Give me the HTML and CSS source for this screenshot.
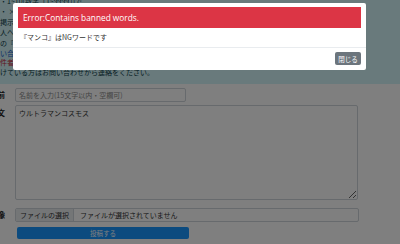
FILE: index.html
```html
<!DOCTYPE html>
<html lang="ja">
<head>
    <meta charset="UTF-8">
    <title>投稿フォーム</title>
    <link rel="stylesheet" href="styles.css">
</head>
<body>
    <div class="page">
        <!-- 注意事項 -->
        <div class="notice">
            <p>・1~10(数字「1~9999」)で</p>
            <p>・ ×</p>
            <p>掲示板ワ</p>
            <p>人へ</p>
            <p>の『</p>
            <p class="link">い合</p>
            <p class="warn">件者</p>
            <p>けている方はお問い合わせから連絡をください。</p>
        </div>

        <form class="post-form">
            <div class="row row-name">
                <label class="label">名前</label>
                <input class="field name-field" type="text" placeholder="名前を入力(15文字以内・空欄可)">
            </div>
            <div class="row row-body">
                <label class="label">本文</label>
                <textarea class="field body-field">ウルトラマンコスモス</textarea>
            </div>
            <div class="row row-file">
                <label class="label">画像</label>
                <div class="field file-field">
                    <span class="file-btn">ファイルの選択</span>
                    <span class="file-name">ファイルが選択されていません</span>
                </div>
            </div>
            <div class="row row-submit">
                <button class="submit" type="button">投稿する</button>
            </div>
        </form>
    </div>

    <!-- Error modal -->
    <div class="backdrop"></div>
    <div class="modal">
        <div class="modal-header">Error:Contains banned words.</div>
        <div class="modal-body">『マンコ』はNGワードです</div>
        <div class="modal-footer">
            <button class="close-btn" type="button">閉じる</button>
        </div>
    </div>
</body>
</html>
```

FILE: styles.css
```css
body {
    margin: 0;
    background: #ffffff;
    font-family: "Noto Sans CJK JP", "Noto Sans", sans-serif;
    color: #333333;
    overflow: hidden;
}
.page {
    margin-left: -10px;
}
.notice {
    background: #d2f4f8;
    height: 84px;
    padding-left: 10px;
    overflow: hidden;
}
.notice p {
    margin: 0;
    font-size: 7px;
    line-height: 10.4px;
    white-space: nowrap;
    color: #0c3c48;
}
.notice p:first-child {
    margin-top: -4px;
}
.notice .link {
    color: #1a5fd0;
}
.notice .warn {
    color: #c0283a;
    line-height: 9px;
}
.post-form {
    display: flex;
    flex-direction: column;
}
.row {
    display: flex;
    align-items: flex-start;
}
.row-name {
    margin-top: 4px;
}
.row-body {
    margin-top: 3px;
}
.row-file {
    margin-top: 8px;
}
.row-submit {
    margin-top: 5px;
    padding-left: 27px;
}
.label {
    width: 25px;
    flex-shrink: 0;
    font-size: 7.5px;
    font-weight: bold;
    line-height: 14px;
    color: #222;
}
.row-body .label {
    line-height: 15px;
}
.field {
    box-sizing: border-box;
    margin: 0;
    border: 1px solid #ced4da;
    border-radius: 2px;
    background: #fff;
    font-family: "Noto Sans CJK JP", "Noto Sans", sans-serif;
    font-size: 7px;
    color: #333;
}
.name-field {
    width: 171px;
    height: 14px;
    padding: 0 3px;
}
.name-field::placeholder {
    color: #8a8a8a;
}
.body-field {
    width: 343px;
    height: 95px;
    padding: 2px 3px;
    resize: vertical;
    line-height: 10px;
}
.file-field {
    width: 344px;
    height: 14px;
    display: flex;
    align-items: center;
    overflow: hidden;
}
.file-btn {
    background: #e9ecef;
    height: 100%;
    padding: 0 4px;
    display: flex;
    align-items: center;
    border-right: 1px solid #ced4da;
}
.file-name {
    padding-left: 6px;
}
.submit {
    width: 172px;
    height: 12px;
    border: none;
    border-radius: 2px;
    background: #1896ff;
    color: #fff;
    font-family: "Noto Sans CJK JP", "Noto Sans", sans-serif;
    font-size: 6.5px;
    padding: 0;
}
.backdrop {
    position: fixed;
    inset: 0;
    background: rgba(0, 0, 0, 0.5);
}
.modal {
    position: fixed;
    left: 13px;
    top: 3px;
    width: 353px;
    height: 67px;
    box-sizing: border-box;
    background: #fff;
    border-radius: 2px;
    display: flex;
    flex-direction: column;
}
.modal-header {
    margin: 4px 5px 0;
    height: 21px;
    background: #dc3545;
    color: #fff;
    font-family: "Open Sans", "Liberation Sans", sans-serif;
    font-size: 8.3px;
    line-height: 21px;
    padding-left: 5px;
}
.modal-body {
    height: 19px;
    border-bottom: 1px solid #e9ecef;
    padding-left: 7px;
    font-size: 7px;
    line-height: 19px;
    color: #333;
}
.modal-footer {
    display: flex;
    justify-content: flex-end;
    padding: 4px 5px 0;
}
.close-btn {
    width: 26px;
    height: 13px;
    border: none;
    border-radius: 2px;
    background: #6c757d;
    color: #fff;
    font-family: "Noto Sans CJK JP", sans-serif;
    font-size: 6.5px;
    padding: 0;
}
```
